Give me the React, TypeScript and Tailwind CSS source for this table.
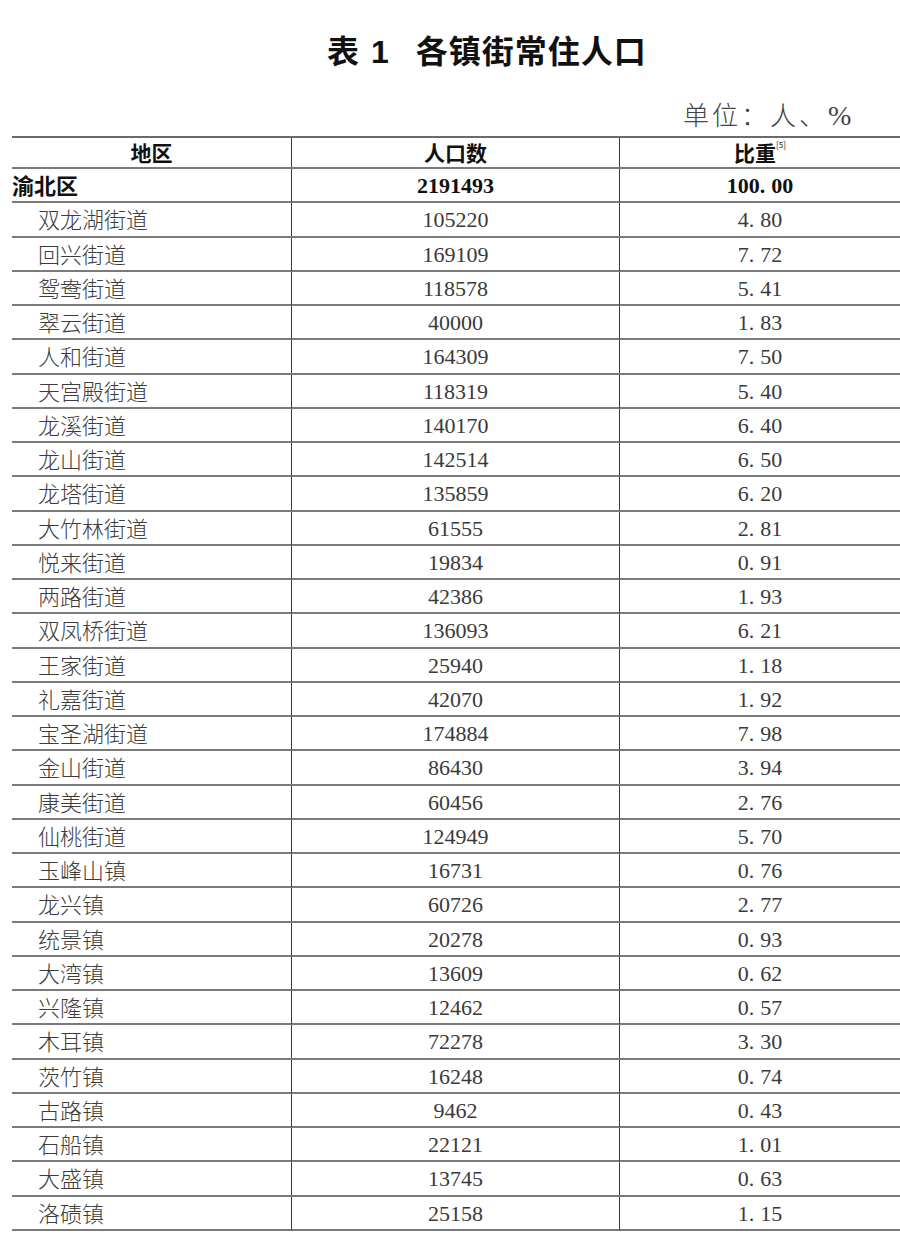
import React from "react";

type Row = {
  name: string;
  population: string;
  share: string;
};

const rows: Row[] = [
  { name: "双龙湖街道", population: "105220", share: "4.80" },
  { name: "回兴街道", population: "169109", share: "7.72" },
  { name: "鸳鸯街道", population: "118578", share: "5.41" },
  { name: "翠云街道", population: "40000", share: "1.83" },
  { name: "人和街道", population: "164309", share: "7.50" },
  { name: "天宫殿街道", population: "118319", share: "5.40" },
  { name: "龙溪街道", population: "140170", share: "6.40" },
  { name: "龙山街道", population: "142514", share: "6.50" },
  { name: "龙塔街道", population: "135859", share: "6.20" },
  { name: "大竹林街道", population: "61555", share: "2.81" },
  { name: "悦来街道", population: "19834", share: "0.91" },
  { name: "两路街道", population: "42386", share: "1.93" },
  { name: "双凤桥街道", population: "136093", share: "6.21" },
  { name: "王家街道", population: "25940", share: "1.18" },
  { name: "礼嘉街道", population: "42070", share: "1.92" },
  { name: "宝圣湖街道", population: "174884", share: "7.98" },
  { name: "金山街道", population: "86430", share: "3.94" },
  { name: "康美街道", population: "60456", share: "2.76" },
  { name: "仙桃街道", population: "124949", share: "5.70" },
  { name: "玉峰山镇", population: "16731", share: "0.76" },
  { name: "龙兴镇", population: "60726", share: "2.77" },
  { name: "统景镇", population: "20278", share: "0.93" },
  { name: "大湾镇", population: "13609", share: "0.62" },
  { name: "兴隆镇", population: "12462", share: "0.57" },
  { name: "木耳镇", population: "72278", share: "3.30" },
  { name: "茨竹镇", population: "16248", share: "0.74" },
  { name: "古路镇", population: "9462", share: "0.43" },
  { name: "石船镇", population: "22121", share: "1.01" },
  { name: "大盛镇", population: "13745", share: "0.63" },
  { name: "洛碛镇", population: "25158", share: "1.15" },
];

// the period in the source is set half-width, wider than a latin dot
const Share = ({ value }: { value: string }) => {
  const [whole, frac] = value.split(".");
  return (
    <span>
      {whole}
      <span className="mr-[6px]">.</span>
      {frac}
    </span>
  );
};

const rowClass = "grid grid-cols-[280px_328px_280px] h-[34.25px] border-b-2 border-[#7a7a7a]";
const cellClass = "flex items-center justify-center border-r border-[#3a3a3a]";
const cjk = { fontFamily: '"Noto Sans CJK SC", sans-serif' };

export default function App() {
  return (
    <div
      className="w-[900px] h-[1242px] bg-white text-[#333]"
      style={{ fontFamily: '"Liberation Serif", "Noto Sans CJK SC", serif' }}
    >
      <div className="h-[100px] pt-[4px] flex items-center pl-[327px]">
        <h1
          className="text-[32px] font-bold text-[#111] leading-none flex items-center"
          style={{ fontFamily: '"Liberation Sans", "Noto Sans CJK SC", sans-serif' }}
        >
          <span>表</span>
          <span className="ml-[12px]">1</span>
          <span className="ml-[27px] tracking-[1px]">各镇街常住人口</span>
        </h1>
      </div>

      <div className="h-[30px] flex items-center pl-[683px]">
        <span className="text-[26px] font-light leading-none text-[#444] tracking-[3px]" style={cjk}>
          单位：人、<span className="text-[28px]" style={{ fontFamily: '"Liberation Serif", serif' }}>%</span>
        </span>
      </div>

      <div className="mt-[6px] ml-[12px] w-[888px] border-t-2 border-[#6a6a6a]">
        <div
          className="grid grid-cols-[280px_328px_280px] h-[31px] border-b-2 border-[#7a7a7a] font-bold text-[21px] text-[#111] leading-none"
          style={cjk}
        >
          <div className={cellClass}>地区</div>
          <div className={cellClass}>人口数</div>
          <div className="flex items-center justify-center">
            <span>比重</span>
            <sup className="text-[8px] font-normal -mt-[8px]">[5]</sup>
          </div>
        </div>

        <div className={`${rowClass} font-bold text-[22px] text-[#111]`}>
          <div className={`${cellClass} justify-start! leading-none pb-[3px]`} style={cjk}>
            渝北区
          </div>
          <div className={cellClass}>2191493</div>
          <div className="flex items-center justify-center">
            <Share value="100.00" />
          </div>
        </div>

        {rows.map((row) => (
          <div key={row.name} className={`${rowClass} text-[22px]`}>
            <div
              className={`${cellClass} justify-start! pl-[26px] pb-[3px] leading-none text-[#3c3c3c] font-light`}
              style={cjk}
            >
              {row.name}
            </div>
            <div className={`${cellClass} text-[#3a3a3a]`}>{row.population}</div>
            <div className="flex items-center justify-center text-[#3a3a3a]">
              <Share value={row.share} />
            </div>
          </div>
        ))}
      </div>
    </div>
  );
}
